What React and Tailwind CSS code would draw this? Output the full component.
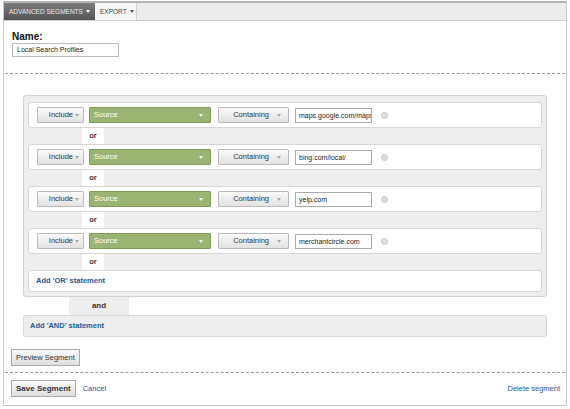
import React from "react";

const rows = [
  "maps.google.com/maps",
  "bing.com/local/",
  "yelp.com",
  "merchantcircle.com",
];

// tiny down-pointing triangle used on the dropdown buttons
const Caret = ({ className }) => (
  <span
    className={`inline-block w-0 h-0 border-l-[2.5px] border-r-[2.5px] border-t-[3px] border-l-transparent border-r-transparent ${className}`}
  ></span>
);

const ConditionRow = ({ value }) => {
  return (
    <div className="flex items-center h-[26px] bg-white border border-[#d6d6d6] rounded-[3px] pl-[8px]">
      <div className="flex items-center justify-end w-[47px] h-[16px] pr-[4px] border border-[#bbb] bg-gradient-to-b from-[#fafafa] to-[#e2e2e2] rounded-[1px] text-[7.5px] text-[#333]">
        Include
        <Caret className="ml-[2px] border-t-[#aaa]" />
      </div>
      <div className="flex items-center justify-between w-[122px] h-[16px] ml-[5px] px-[4px] bg-[#99b571] border border-[#7f9b5a] rounded-[1px] text-[7.5px] text-white">
        Source
        <Caret className="mr-[3px] border-t-white" />
      </div>
      <div className="flex items-center justify-end w-[71px] h-[16px] ml-[7px] pr-[7px] border border-[#bbb] bg-gradient-to-b from-[#fafafa] to-[#e2e2e2] rounded-[1px] text-[7.5px] text-[#333]">
        Containing
        <Caret className="ml-[8px] border-t-[#aaa]" />
      </div>
      <div className="w-[77px] h-[15px] ml-[6px] pl-[3px] border border-[#aaa] bg-white text-[7px] leading-[13px] text-[#222] overflow-hidden whitespace-nowrap">
        {value}
      </div>
      <span className="ml-[9px] w-[7px] h-[7px] rounded-full bg-[#ddd] border border-[#c8c8c8]"></span>
    </div>
  );
};

const OrTab = () => (
  <div className="ml-[54px] w-[22px] h-[16px] bg-white text-center text-[7.5px] font-bold leading-[16px] text-[#333]">
    or
  </div>
);

export default function App() {
  return (
    <div
      className="w-[570px] h-[409px] bg-white pt-px px-[3px] overflow-hidden"
      style={{ fontFamily: "'Liberation Sans', Arial, sans-serif" }}
    >
      <div className="w-[564px] h-[405px] border border-[#c6c6c6] border-t-0 flex flex-col">
        <div className="flex h-[20px] bg-[#ececec] border-t-2 border-[#b4b4b4] border-b border-b-[#cfcfcf]">
          <div className="flex items-center w-[91px] pl-[5px] bg-gradient-to-b from-[#7a7a7a] to-[#555] text-[6.5px] text-[#e8e8e8]">
            ADVANCED SEGMENTS
            <Caret className="ml-[3px] border-t-white" />
          </div>
          <div className="flex items-center w-[42px] pl-[5px] bg-[#f6f6f6] border-r border-[#d0d0d0] text-[6.5px] text-[#444]">
            EXPORT
            <Caret className="ml-[3px] border-t-[#555]" />
          </div>
        </div>

        <div className="px-[8px] pt-[10px]">
          <div className="text-[10px] font-bold leading-[11px] text-[#111]">Name:</div>
          <div className="mt-[1px] w-[107px] h-[14px] border border-[#bbb] pl-[4px] text-[7px] leading-[12px] text-[#222]">
            Local Search Profiles
          </div>
        </div>

        <div className="mt-[16px] mx-[1px] border-t border-dashed border-[#9a9a9a]"></div>

        <div className="pl-[19px] pr-[19px] pt-[21px]">
          <div className="bg-[#eeeeee] border border-[#d2d2d2] rounded-[3px] px-[4px] pt-[6px] pb-[4px]">
            {rows.map((v) => (
              <div key={v}>
                <ConditionRow value={v} />
                <OrTab />
              </div>
            ))}
            <div className="flex items-center h-[22px] bg-white border border-[#d6d6d6] rounded-[3px] pl-[7px] text-[7.5px] font-bold text-[#1f5a93]">
              Add 'OR' statement
            </div>
          </div>
          <div className="ml-[46px] w-[60px] h-[18px] bg-[#eeeeee] text-center text-[8px] font-bold leading-[18px] text-[#333]">
            and
          </div>
          <div className="flex items-center h-[22px] bg-[#eeeeee] border border-[#d6d6d6] rounded-[3px] pl-[6px] text-[7.5px] font-bold text-[#1f5a93]">
            Add 'AND' statement
          </div>
        </div>

        <div className="flex px-[7px] pt-[12px]">
          <button className="h-[17px] px-[4px] border border-[#aaa] bg-gradient-to-b from-[#fafafa] to-[#dedede] text-[7.5px] leading-[15px] text-[#333]">
            Preview Segment
          </button>
        </div>

        <div className="mt-[6px] mx-[1px] border-t border-dashed border-[#9a9a9a]"></div>

        <div className="flex items-center px-[7px] pt-[7px]">
          <button className="h-[17px] px-[4px] border border-[#aaa] bg-gradient-to-b from-[#fafafa] to-[#dedede] text-[8px] leading-[15px] font-bold text-[#333]">
            Save Segment
          </button>
          <span className="ml-[7px] text-[7.5px] text-[#1f5a93]">Cancel</span>
          <span className="ml-auto mr-[-1px] text-[7.5px] text-[#1f5a93]">Delete segment</span>
        </div>
      </div>
    </div>
  );
}
